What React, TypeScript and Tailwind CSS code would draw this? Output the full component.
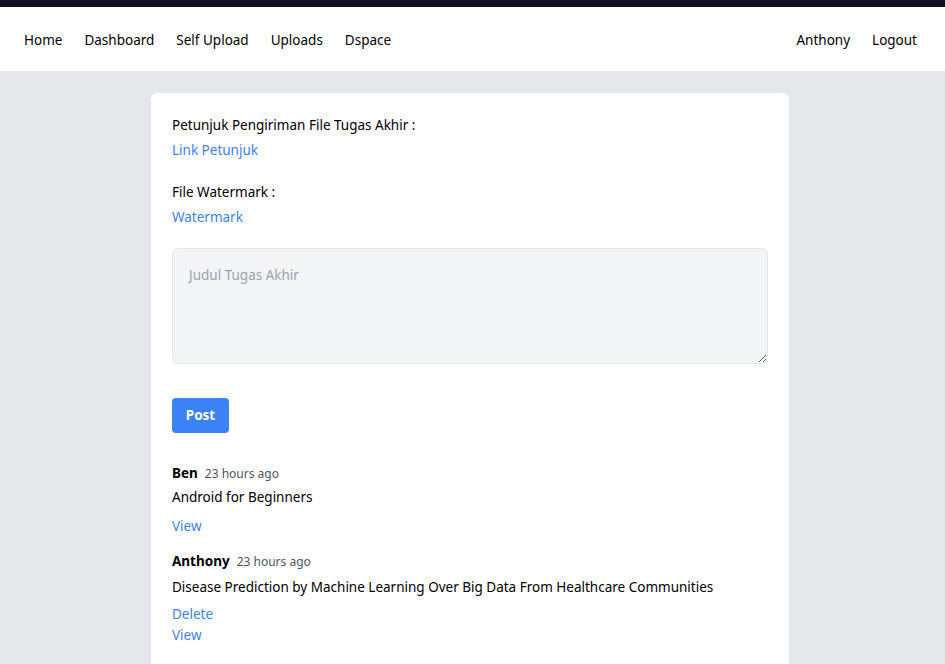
export default function App() {
  return (
    <div className="min-h-screen bg-[#e5e7eb] text-[13.5px] text-black font-['Noto_Sans',sans-serif]">
      <div className="h-[7px] bg-[#110e1f]" />
      <nav className="flex h-[64px] items-center justify-between bg-white pt-[2px] pl-[24px] pr-[28px]">
        <div className="flex gap-[22px]">
          <a>Home</a>
          <a>Dashboard</a>
          <a>Self Upload</a>
          <a>Uploads</a>
          <a>Dspace</a>
        </div>
        <div className="flex gap-[22px]">
          <a>Anthony</a>
          <a>Logout</a>
        </div>
      </nav>

      <div className="pt-[22px] pr-[5px]">
        <div className="mx-auto w-[638px] rounded-md bg-white px-[21px] pt-[22px] pb-[30px]">
          <p className="leading-[20px]">Petunjuk Pengiriman File Tugas Akhir :</p>
          <a className="mt-[5px] block leading-[20px] text-[#3b82f6]">Link Petunjuk</a>

          <p className="mt-[22px] leading-[20px]">File Watermark :</p>
          <a className="mt-[5px] block leading-[20px] text-[#3b82f6]">Watermark</a>

          <textarea
            placeholder="Judul Tugas Akhir"
            className="mt-[21px] block h-[116px] w-full rounded-md border border-[#e5e7eb] bg-[#f3f4f6] px-[16px] py-[16px] text-[13.5px] placeholder:text-[#9ca3af] outline-none"
          />

          <button className="mt-[34px] h-[35px] w-[57px] rounded bg-[#3b82f6] font-bold text-white">
            Post
          </button>

          <div className="mt-[30px]">
            <div className="flex items-baseline gap-[7px] leading-[20px]">
              <span className="font-bold">Ben</span>
              <span className="text-[12px] text-[#4b5563]">23 hours ago</span>
            </div>
            <p className="mt-[3px] leading-[20px]">Android for Beginners</p>
            <a className="mt-[9px] block leading-[20px] text-[#3b82f6]">View</a>
          </div>

          <div className="mt-[15px]">
            <div className="flex items-baseline gap-[7px] leading-[20px]">
              <span className="font-bold">Anthony</span>
              <span className="text-[12px] text-[#4b5563]">23 hours ago</span>
            </div>
            <p className="mt-[5px] leading-[20px]">
              Disease Prediction by Machine Learning Over Big Data From Healthcare Communities
            </p>
            <a className="mt-[7px] block leading-[20px] text-[#3b82f6]">Delete</a>
            <a className="mt-[1px] block leading-[20px] text-[#3b82f6]">View</a>
          </div>
        </div>
      </div>
    </div>
  );
}
